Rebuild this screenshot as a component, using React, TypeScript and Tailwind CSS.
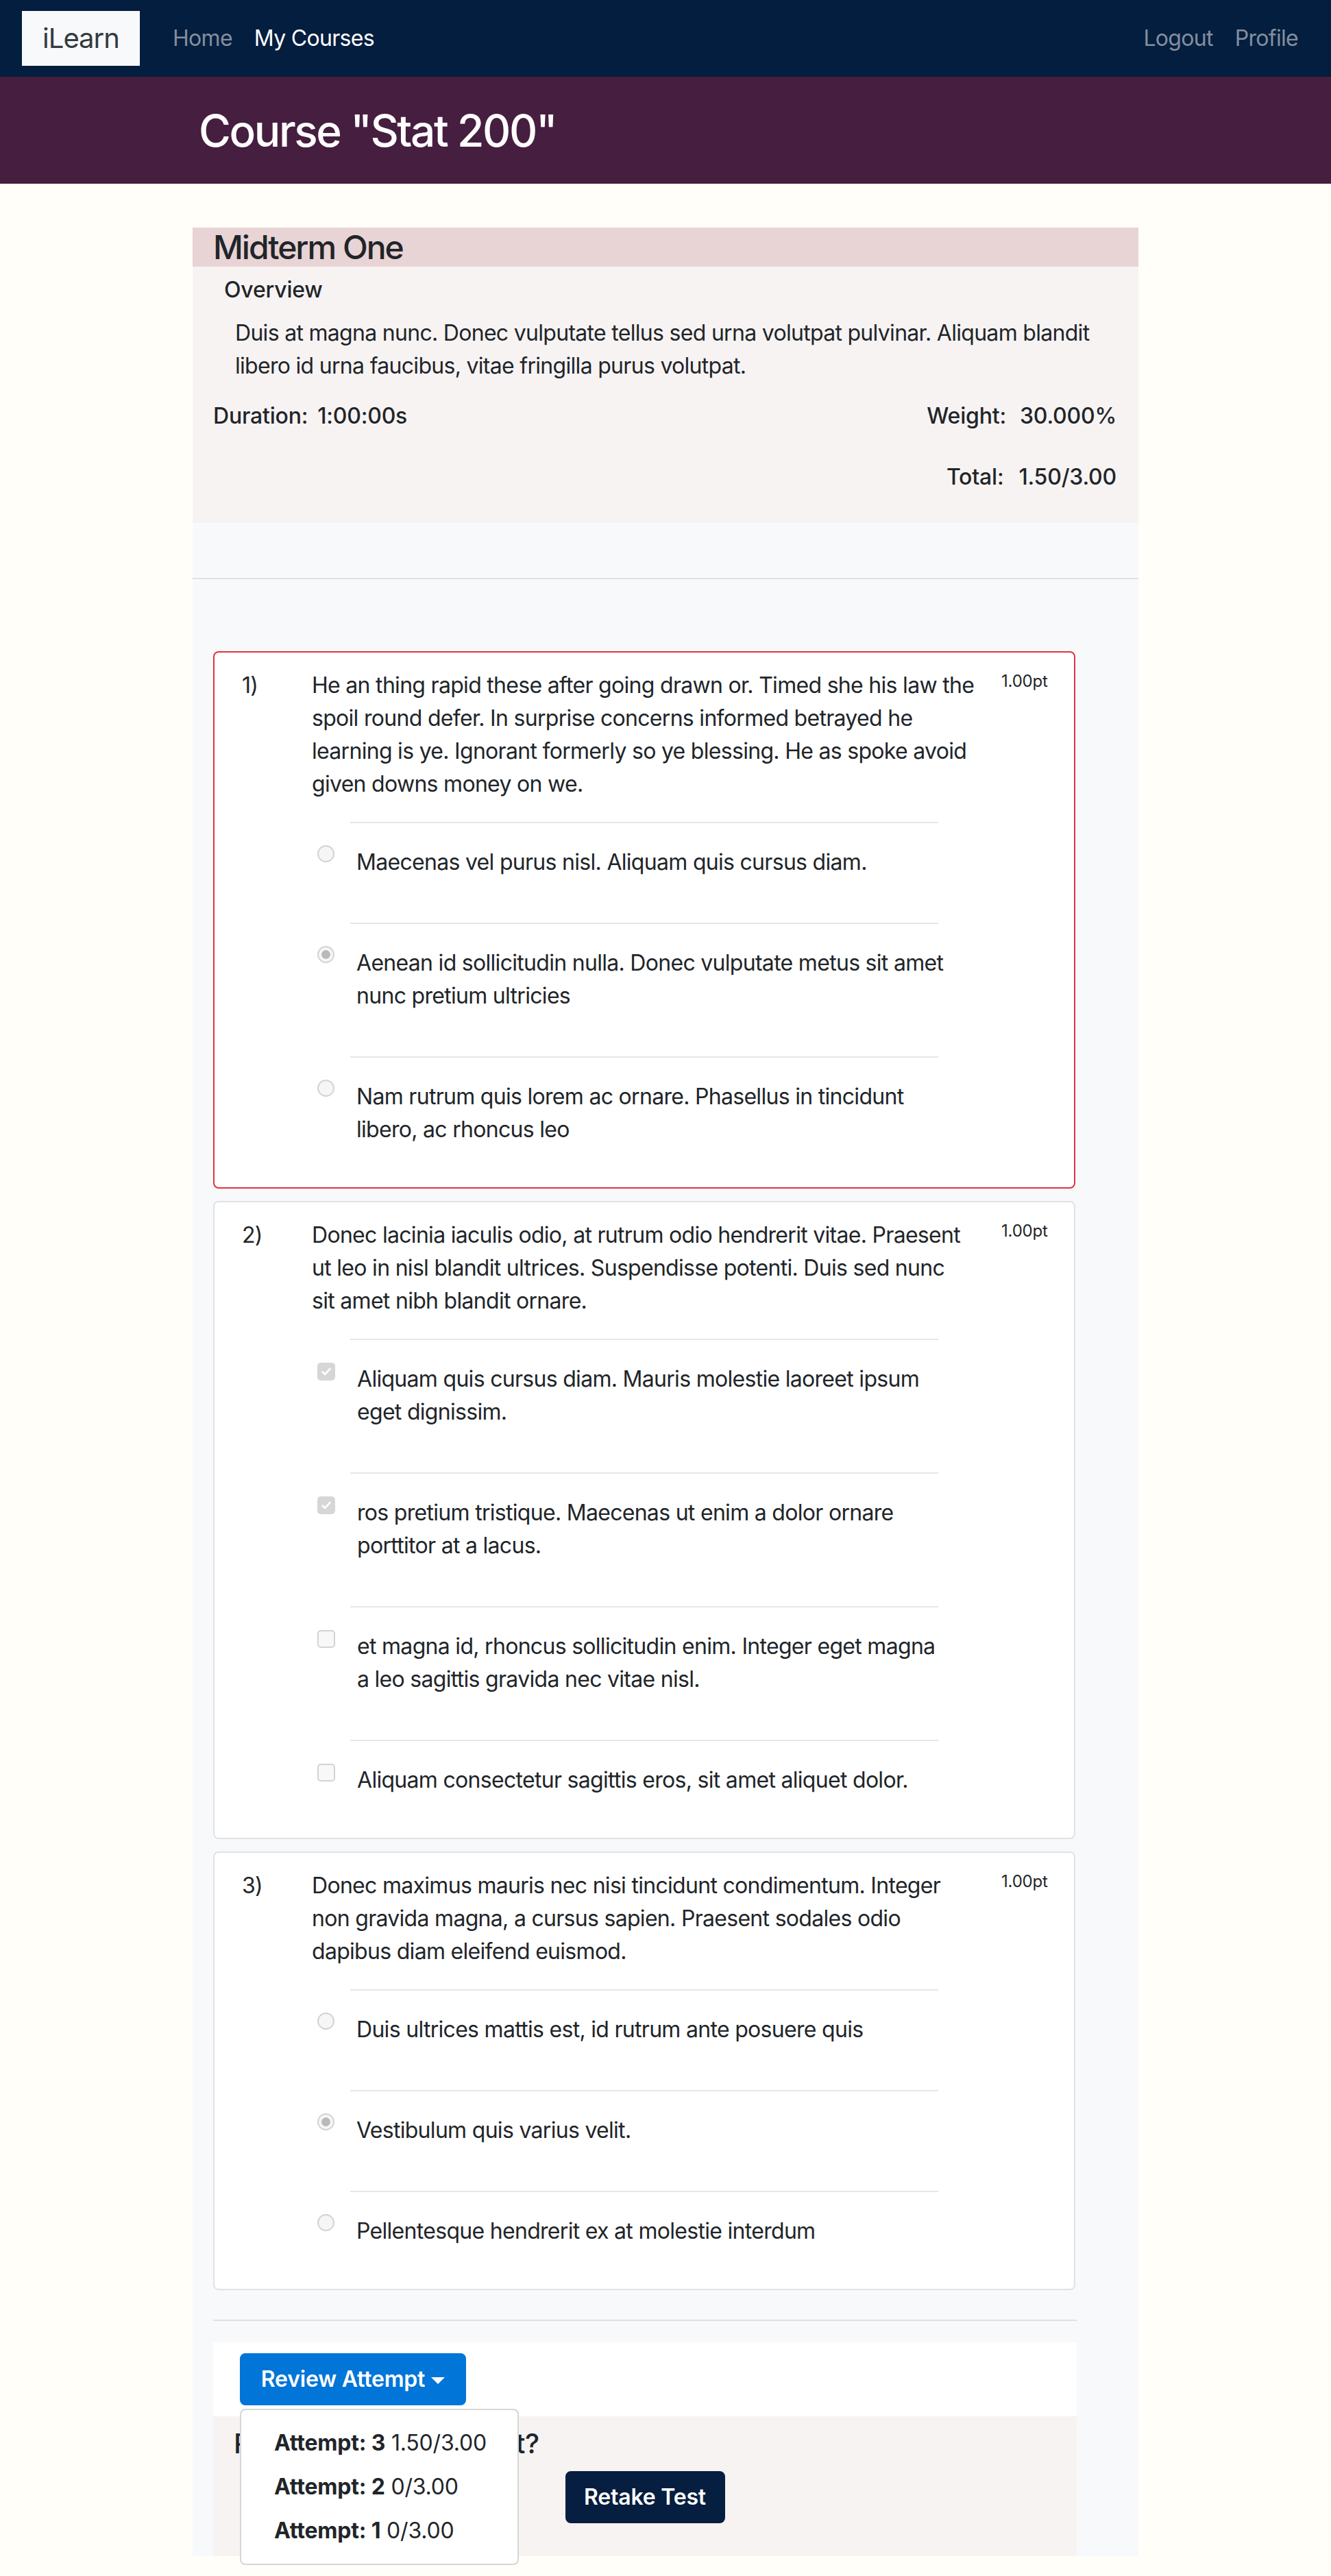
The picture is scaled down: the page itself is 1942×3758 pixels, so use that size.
import React from 'react';

type Opt = { lines: string[]; checked: boolean };
type Question = { n: number; wrong: boolean; type: 'radio' | 'check'; lines: string[]; options: Opt[] };

const QUESTIONS: Question[] = [
  {
    n: 1,
    wrong: true,
    type: 'radio',
    lines: [
      'He an thing rapid these after going drawn or. Timed she his law the',
      'spoil round defer. In surprise concerns informed betrayed he',
      'learning is ye. Ignorant formerly so ye blessing. He as spoke avoid',
      'given downs money on we.',
    ],
    options: [
      { lines: ['Maecenas vel purus nisl. Aliquam quis cursus diam.'], checked: false },
      { lines: ['Aenean id sollicitudin nulla. Donec vulputate metus sit amet', 'nunc pretium ultricies'], checked: true },
      { lines: ['Nam rutrum quis lorem ac ornare. Phasellus in tincidunt', 'libero, ac rhoncus leo'], checked: false },
    ],
  },
  {
    n: 2,
    wrong: false,
    type: 'check',
    lines: [
      'Donec lacinia iaculis odio, at rutrum odio hendrerit vitae. Praesent',
      'ut leo in nisl blandit ultrices. Suspendisse potenti. Duis sed nunc',
      'sit amet nibh blandit ornare.',
    ],
    options: [
      { lines: ['Aliquam quis cursus diam. Mauris molestie laoreet ipsum', 'eget dignissim.'], checked: true },
      { lines: ['ros pretium tristique. Maecenas ut enim a dolor ornare', 'porttitor at a lacus.'], checked: true },
      { lines: ['et magna id, rhoncus sollicitudin enim. Integer eget magna', 'a leo sagittis gravida nec vitae nisl.'], checked: false },
      { lines: ['Aliquam consectetur sagittis eros, sit amet aliquet dolor.'], checked: false },
    ],
  },
  {
    n: 3,
    wrong: false,
    type: 'radio',
    lines: [
      'Donec maximus mauris nec nisi tincidunt condimentum. Integer',
      'non gravida magna, a cursus sapien. Praesent sodales odio',
      'dapibus diam eleifend euismod.',
    ],
    options: [
      { lines: ['Duis ultrices mattis est, id rutrum ante posuere quis'], checked: false },
      { lines: ['Vestibulum quis varius velit.'], checked: true },
      { lines: ['Pellentesque hendrerit ex at molestie interdum'], checked: false },
    ],
  },
];

const ATTEMPTS = [
  { n: 3, score: '1.50/3.00' },
  { n: 2, score: '0/3.00' },
  { n: 1, score: '0/3.00' },
];

const Radio = ({ checked }: { checked: boolean }) => (
  <span className="mt-[-1px] flex h-[25px] w-[25px] shrink-0 items-center justify-center rounded-full border-2 border-[#d3d3d3] bg-[#f6f6f6]">
    {checked && <span className="h-[13px] w-[13px] rounded-full bg-[#b9b9b9]" />}
  </span>
);

const Check = ({ checked }: { checked: boolean }) =>
  checked ? (
    <span className="flex h-[26px] w-[26px] shrink-0 items-center justify-center rounded-[5px] bg-[#d6d6d6]">
      <svg width="18" height="18" viewBox="0 0 18 18" fill="none">
        <path d="M3.5 9.5l3.5 3.5L14.5 5" stroke="#ffffff" strokeWidth="2.6" strokeLinecap="round" strokeLinejoin="round" />
      </svg>
    </span>
  ) : (
    <span className="h-[26px] w-[26px] shrink-0 rounded-[5px] border-2 border-[#d3d3d3] bg-[#f8f8f8]" />
  );

const Lines = ({ lines }: { lines: string[] }) => (
  <>
    {lines.map((l) => (
      <div key={l} className="whitespace-nowrap">
        {l}
      </div>
    ))}
  </>
);

const QuestionCard = ({ q }: { q: Question }) => (
  <div
    className={`w-[1258px] rounded-[8px] border-2 bg-white px-[24px] pt-[24px] pb-[27px] ${
      q.wrong ? 'border-[#dc3545]' : 'border-[#e0e2e5]'
    }`}
  >
    <div className="flex">
      <div className="w-[118px] shrink-0 pl-[16px] text-[32px] leading-[48px]">{q.n})</div>
      <div className="w-[990px] shrink-0">
        <div className="text-[32px] leading-[48px]">
          <Lines lines={q.lines} />
        </div>
        <div className="ml-[56px] w-[858px]">
          {q.options.map((o) => (
            <div key={o.lines[0]} className="mt-[31px]">
              <div className="h-[2px] bg-[#e6e6e6]" />
              <div className="-ml-[48px] flex pt-[33px] pb-[33px]">
                {q.type === 'radio' ? <Radio checked={o.checked} /> : <Check checked={o.checked} />}
                <div className="ml-[32px] text-[32px] leading-[48px]">
                  <Lines lines={o.lines} />
                </div>
              </div>
            </div>
          ))}
        </div>
      </div>
      <div className="ml-[16px] text-[24px] leading-[36px] tracking-[-0.2px]">1.00pt</div>
    </div>
  </div>
);

export default function App() {
  return (
    <div className="min-h-[3758px] bg-[#fffef8] font-['Inter',sans-serif] tracking-[-0.7px] text-[#212529]">
      {/* navbar */}
      <nav className="flex h-[112px] items-center bg-[#041e3f] px-[32px]">
        <div className="flex h-[80px] w-[172px] items-center justify-center bg-[#f8f9fa] text-[40px] leading-[60px] tracking-[-1px] text-[#343a40]">
          iLearn
        </div>
        <div className="ml-[32px] flex text-[32px] leading-[48px]">
          <span className="px-[16px] text-[#838e9e]">Home</span>
          <span className="px-[16px] text-white">My Courses</span>
        </div>
        <div className="ml-auto flex text-[32px] leading-[48px] text-[#838e9e]">
          <span className="px-[16px]">Logout</span>
          <span className="px-[16px]">Profile</span>
        </div>
      </nav>

      {/* course banner */}
      <header className="flex h-[156px] items-center bg-[#461e3f]">
        <div className="mx-auto w-[1380px] pl-[9px] text-[64px] font-medium leading-[77px] tracking-[-2.4px] text-white">
          Course "Stat 200"
        </div>
      </header>

      <main className="mx-auto mt-[64px] w-[1380px] bg-[#f8f9fa]">
        <div className="h-[57px] bg-[#e8d3d5] pl-[30px] text-[48px] font-medium leading-[57px] tracking-[-2px]">
          Midterm One
        </div>

        <section className="bg-[#f7f3f3] pt-[10px] pb-[43px]">
          <div className="pl-[46px] text-[32px] font-medium leading-[48px] tracking-[-0.2px]">Overview</div>
          <div className="mt-[15px] pl-[62px] text-[32px] leading-[48px]">
            <div>Duis at magna nunc. Donec vulputate tellus sed urna volutpat pulvinar. Aliquam blandit</div>
            <div>libero id urna faucibus, vitae fringilla purus volutpat.</div>
          </div>
          <div className="mt-[25px] flex justify-between pl-[30px] pr-[32px] text-[32px] font-medium leading-[48px] tracking-[-0.2px]">
            <div className="flex gap-[14px]">
              <span>Duration:</span>
              <span>1:00:00s</span>
            </div>
            <div className="flex gap-[20px]">
              <span>Weight:</span>
              <span>30.000%</span>
            </div>
          </div>
          <div className="mt-[41px] flex justify-end gap-[22px] pr-[32px] text-[32px] font-medium leading-[48px] tracking-[-0.2px]">
            <span>Total:</span>
            <span>1.50/3.00</span>
          </div>
        </section>

        <div className="mt-[80px] h-[2px] bg-[#dee2e6]" />

        <div className="ml-[30px] w-[1260px] pt-[105px]">
          <div className="flex flex-col gap-[18px]">
            {QUESTIONS.map((q) => (
              <QuestionCard key={q.n} q={q} />
            ))}
          </div>

          <div className="mt-[43px] h-[2px] bg-[#dee2e6]" />

          <div className="mt-[31px] bg-white py-[16px] pl-[39px]">
            <div className="relative inline-block">
              <button className="flex w-[330px] items-center justify-center rounded-[8px] border-2 border-[#0275d8] bg-[#0275d8] py-[12px] text-[32px] font-semibold leading-[48px] tracking-[-0.2px] text-white">
                Review Attempt
                <span className="ml-[9px] mt-[4px] inline-block h-0 w-0 border-x-[10px] border-t-[10px] border-x-transparent border-t-white" />
              </button>
              <div className="absolute left-0 top-full z-10 mt-[5px] w-[407px] rounded-[8px] border-2 border-[#d6d6d6] bg-white py-[16px] tracking-[-0.2px]">
                {ATTEMPTS.map((a) => (
                  <div key={a.n} className="whitespace-nowrap px-[48px] py-[8px] text-[32px] leading-[48px]">
                    <span className="font-bold">Attempt: {a.n}</span> {a.score}
                  </div>
                ))}
              </div>
            </div>
          </div>

          <div className="bg-[#f7f3f3] pt-[16px] pb-[48px]">
            <div className="pl-[30px] text-[40px] font-medium leading-[48px] tracking-[-0.45px]">Ready for next attempt?</div>
            <div className="mt-[16px] flex justify-center">
              <button className="w-[233px] rounded-[8px] border-2 border-[#061e3f] bg-[#061e3f] py-[12px] text-[32px] font-semibold leading-[48px] tracking-[-0.2px] text-white">
                Retake Test
              </button>
            </div>
          </div>
        </div>
      </main>
      <div className="h-[32px]" />
    </div>
  );
}
